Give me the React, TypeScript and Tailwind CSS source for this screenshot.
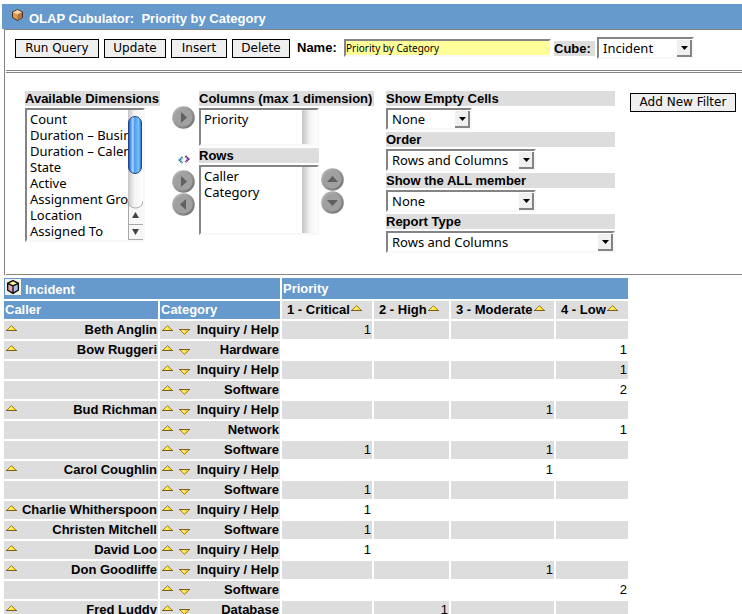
import type { ReactNode } from "react";

const VERDANA = "font-['DejaVu_Sans',sans-serif]";
const inset = "border-2 border-t-[#848484] border-l-[#848484] border-r-[#f8f8f8] border-b-[#f8f8f8] bg-white";

function ToolButton({ children, width }: { children: ReactNode; width: string }) {
  return (
    <button
      type="button"
      className={`${VERDANA} ${width} h-[19px] shrink-0 border border-black bg-[#efefef] text-center text-xs leading-4 whitespace-nowrap`}
    >
      {children}
    </button>
  );
}

function Dropdown({ id, value, width }: { id: string; value: string; width: string }) {
  return (
    <span className={`relative block shrink-0 ${width}`}>
      <select
        id={id}
        defaultValue={value}
        className={`${inset} block h-[22px] w-full appearance-none rounded-none py-0 pr-4 pl-1 font-['Noto_Sans',sans-serif] text-[13px] leading-4 outline-none`}
      >
        <option>{value}</option>
      </select>
      <svg className="pointer-events-none absolute top-[3px] right-0.5" width="15" height="17" viewBox="0 0 15 17" aria-hidden="true">
        <path d="M0 0H15V17H0Z" fill="#848484" />
        <path d="M0 0H13V15H0Z" fill="#f0f0f0" />
        <path d="M4 6H11L7.500 10Z" fill="#000" />
      </svg>
    </span>
  );
}

function Label({ htmlFor, children }: { htmlFor: string; children: ReactNode }) {
  return (
    <label htmlFor={htmlFor} className="block h-[15px] bg-[#ddd] leading-[15px] font-bold whitespace-nowrap">
      {children}
    </label>
  );
}

function ListBox({ id, items, height, scroll }: { id: string; items: string[]; height: string; scroll?: boolean }) {
  return (
    <div className={`${inset} ${height} flex w-[120px]`}>
      <select
        id={id}
        multiple
        className="block h-full min-w-0 flex-1 appearance-none overflow-hidden border-0 bg-white p-0 font-['Noto_Sans',sans-serif] text-[13px] outline-none"
      >
        {items.map((item) => (
          <option key={item} className="h-4 min-h-4 overflow-visible p-0 pl-[3px] leading-4">
            {item}
          </option>
        ))}
      </select>
      {scroll ? (
        <ScrollBar />
      ) : (
        <div className="w-[15px] shrink-0 bg-linear-to-r from-[#c4c4c4] via-[#f2f2f2] to-white" />
      )}
    </div>
  );
}

function ScrollBar() {
  return (
    <svg className="shrink-0" width="15" height="130" viewBox="0 0 15 130" aria-hidden="true">
      <defs>
        <linearGradient id="track">
          <stop offset="0" stopColor="#c4c4c4" />
          <stop offset=".4" stopColor="#f2f2f2" />
          <stop offset="1" stopColor="#fff" />
        </linearGradient>
        <linearGradient id="thumb">
          <stop offset="0" stopColor="#1846b4" />
          <stop offset=".15" stopColor="#4b8fe8" />
          <stop offset=".35" stopColor="#b5dcfb" />
          <stop offset=".45" stopColor="#4c9bf0" />
          <stop offset=".8" stopColor="#7ac2fb" />
          <stop offset="1" stopColor="#2359b8" />
        </linearGradient>
      </defs>
      <path d="M0 0H15V130H0Z" fill="url(#track)" />
      <path d="M0 91Q1 98 7.500 98Q14 98 15 91V130H0Z" fill="#f7f7f7" />
      <path d="M0 91Q1 98 7.500 98Q14 98 15 91M0 114.500H15M0 129.500H15M.5 92V130" fill="none" stroke="#a8a8a8" />
      <rect x=".5" y="6.500" width="13" height="57" rx="6.500" fill="url(#thumb)" stroke="#20458e" />
      <path d="M4 108L7.500 102L11 108ZM4 119L7.500 125L11 119Z" fill="#444" />
    </svg>
  );
}

const turns = { right: 0, down: 90, left: 180, up: 270 };

function RoundButton({ dir, label }: { dir: keyof typeof turns; label: string }) {
  return (
    <button type="button" aria-label={label} className="block size-[23px]">
      <svg width="23" height="23" viewBox="0 0 23 23" aria-hidden="true">
        <defs>
          <linearGradient id={`rim-${dir}`} x1="0" y1="0" x2="1" y2="1">
            <stop offset="0" stopColor="#bcbcbc" />
            <stop offset=".5" stopColor="#979797" />
            <stop offset="1" stopColor="#6c6c6c" />
          </linearGradient>
        </defs>
        <circle cx="11.500" cy="11.500" r="11.300" fill={`url(#rim-${dir})`} />
        <circle cx="11.500" cy="11.500" r="9" fill="#a0a0a0" />
        <path d="M9 6L15 11.500L9 17Z" fill="#606060" transform={`rotate(${turns[dir]} 11.500 11.500)`} />
      </svg>
    </button>
  );
}

function Sort({ down, label }: { down?: boolean; label: string }) {
  return (
    <button type="button" aria-label={label} className="block shrink-0">
      <svg width="11" height="6" viewBox="0 0 11 6" aria-hidden="true">
        {down ? (
          <>
            <path d="M.5 .5H10.500L5.500 5.500Z" fill="#ffd21c" stroke="#a08040" />
            <path d="M0 .5H11" stroke="#7d5c22" />
            <path d="M3 1.500H6L5 4Z" fill="#fff9b0" />
          </>
        ) : (
          <>
            <path d="M.5 5.500L5.500 .5L10.500 5.500Z" fill="#ffde1c" stroke="#a08040" />
            <path d="M0 5.500H11" stroke="#7d5c22" />
            <path d="M3 4.500L5 2L6 4.500Z" fill="#fff9b0" />
          </>
        )}
      </svg>
    </button>
  );
}

const columns = ["1 - Critical", "2 - High", "3 - Moderate", "4 - Low"];

const rows: [string, string, string[]][] = [
  ["Beth Anglin", "Inquiry / Help", ["1", "", "", ""]],
  ["Bow Ruggeri", "Hardware", ["", "", "", "1"]],
  ["", "Inquiry / Help", ["", "", "", "1"]],
  ["", "Software", ["", "", "", "2"]],
  ["Bud Richman", "Inquiry / Help", ["", "", "1", ""]],
  ["", "Network", ["", "", "", "1"]],
  ["", "Software", ["1", "", "1", ""]],
  ["Carol Coughlin", "Inquiry / Help", ["", "", "1", ""]],
  ["", "Software", ["1", "", "", ""]],
  ["Charlie Whitherspoon", "Inquiry / Help", ["1", "", "", ""]],
  ["Christen Mitchell", "Software", ["1", "", "", ""]],
  ["David Loo", "Inquiry / Help", ["1", "", "", ""]],
  ["Don Goodliffe", "Inquiry / Help", ["", "", "1", ""]],
  ["", "Software", ["", "", "", "2"]],
  ["Fred Luddy", "Database", ["", "1", "", ""]],
];

const dimensions = [
  "Count",
  "Duration – Business",
  "Duration – Calendar",
  "State",
  "Active",
  "Assignment Group",
  "Location",
  "Assigned To",
];

export default function App() {
  return (
    <div className="h-screen overflow-hidden bg-white pt-1 pl-0.5 font-['Liberation_Sans',Arial,sans-serif] text-[13px] text-black">
      <header className="flex h-[25px] items-center bg-[#6699cc] pl-2.5 text-white">
        <svg className="mb-1 shrink-0" width="11" height="12" viewBox="0 0 11 12" aria-hidden="true">
          <path d="M5.500 .5L10.500 3V8.500L5.500 11.500L.5 8.500V3Z" fill="#d79a5c" stroke="#4a2e16" />
          <path d="M5.500 1L10 3.200L5.500 5.500L1 3.200Z" fill="#f6d2a6" />
          <path d="M5.500 5.500L10 3.200V8.200L5.500 11Z" fill="#b4753a" />
        </svg>
        <h1 className="ml-1.5 pt-1 font-bold whitespace-pre">OLAP Cubulator:  Priority by Category</h1>
      </header>

      <main className="ml-0.5 border-t border-l border-[#848484]">
        <div className="flex h-10 items-center gap-[5px] pb-1 pl-2.5">
          <ToolButton width="w-[84px]">Run Query</ToolButton>
          <ToolButton width="w-[62px]">Update</ToolButton>
          <ToolButton width="w-14">Insert</ToolButton>
          <ToolButton width="w-[58px]">Delete</ToolButton>
          <label htmlFor="name" className="ml-0.5 w-[42px] shrink-0 font-bold">
            Name:
          </label>
          <input
            id="name"
            defaultValue="Priority by Category"
            className="h-[18px] w-[207px] shrink-0 rounded-none border-2 border-t-[#848484] border-r-[#f8f8f8] border-b-[#f8f8f8] border-l-[#848484] bg-[#ffff99] p-0 font-['Noto_Sans',sans-serif] text-[10px] leading-3 outline-none"
          />
          <div className="-ml-0.5 flex items-center gap-0.5">
            <label htmlFor="cube" className="h-[15px] w-[41px] shrink-0 bg-[#ddd] leading-[15px] font-bold">
              Cube:
            </label>
            <Dropdown id="cube" value="Incident" width="w-[97px]" />
          </div>
        </div>

        <div className="ml-px h-[3px] border-y border-[#848484]" />

        <div className="ml-px flex h-[202px] items-start border-b border-[#848484] pt-[18px] pl-[19px]">
          <div className="flex w-[135px] shrink-0 flex-col gap-0.5">
            <Label htmlFor="available">Available Dimensions</Label>
            <ListBox id="available" items={dimensions} height="h-[134px]" scroll />
          </div>

          <div className="ml-3 flex shrink-0 flex-col items-center pt-[15px]">
            <RoundButton dir="right" label="Add column" />
            <svg className="mt-[26px] mb-[5px]" width="12" height="10" viewBox="0 0 12 10" aria-hidden="true">
              <path d="M4.500 2L1.500 5L4.500 8" fill="none" stroke="#1f78a8" strokeWidth="2" strokeDasharray="1.400 .5" />
              <path d="M6.500 3L4.500 5L6.500 7" fill="none" stroke="#c5c94a" strokeDasharray="1 1" />
              <path d="M7.500 1L10.500 4L7.500 7" fill="none" stroke="#5b1a8c" strokeWidth="2" strokeDasharray="1.400 .5" />
            </svg>
            <RoundButton dir="right" label="Add row" />
            <RoundButton dir="left" label="Remove row" />
          </div>

          <div className="ml-1 flex w-[175px] shrink-0 flex-col gap-0.5">
            <Label htmlFor="columns">Columns (max 1 dimension)</Label>
            <ListBox id="columns" items={["Priority"]} height="h-[38px]" />
            <div className="flex gap-0.5">
              <div className="flex w-[120px] flex-col gap-0.5">
                <Label htmlFor="rows">Rows</Label>
                <ListBox id="rows" items={["Caller", "Category"]} height="h-[70px]" />
              </div>
              <div className="flex flex-col pt-5">
                <RoundButton dir="up" label="Move up" />
                <RoundButton dir="down" label="Move down" />
              </div>
            </div>
          </div>

          <div className="ml-3 flex w-[229px] shrink-0 flex-col gap-0.5">
            <Label htmlFor="empty">Show Empty Cells</Label>
            <Dropdown id="empty" value="None" width="w-[86px]" />
            <Label htmlFor="order">Order</Label>
            <Dropdown id="order" value="Rows and Columns" width="w-[150px]" />
            <Label htmlFor="all">Show the ALL member</Label>
            <Dropdown id="all" value="None" width="w-[150px]" />
            <Label htmlFor="type">Report Type</Label>
            <Dropdown id="type" value="Rows and Columns" width="w-full" />
          </div>

          <div className="ml-[15px] pt-px">
            <ToolButton width="w-[106px]">Add New Filter</ToolButton>
          </div>
        </div>
      </main>

      <table className="mt-px w-[628px] table-fixed border-separate border-spacing-0.5 leading-[18px]">
        <colgroup>
          <col className="w-[154px]" />
          <col className="w-[120px]" />
          <col className="w-[90px]" />
          <col className="w-[75px]" />
          <col className="w-[103px]" />
          <col className="w-[72px]" />
        </colgroup>
        <thead>
          <tr className="h-[21px] bg-[#6699cc] text-left text-white">
            <th colSpan={2} className="p-0 pl-px">
              <div className="flex h-[21px] items-start gap-1">
                <svg className="mt-px" width="16" height="16" viewBox="0 0 15 15" aria-hidden="true">
                  <path d="M0 0H15V15H0Z" fill="#f4f1e4" />
                  <path d="M7.500 1.500L12.500 4V10.500L7.500 13.500L2.500 10.500V4Z" fill="#fff" />
                  <path d="M7.500 1.500L12.500 4L7.500 6.500L2.500 4Z" fill="#fdf5a0" />
                  <path d="M2.500 4L7.500 6.500V13.500L2.500 10.500Z" fill="#e5a5ad" />
                  <path d="M7.500 6.500L12.500 4V10.500L7.500 13.500Z" fill="#a9c5ea" />
                  <path d="M7.500 1.500L12.500 4V10.500L7.500 13.500L2.500 10.500V4ZM2.500 4L7.500 6.500L12.500 4M7.500 6.500V13.500" fill="none" stroke="#111" strokeWidth="1.300" />
                </svg>
                <span className="pt-1 leading-4">Incident</span>
              </div>
            </th>
            <th colSpan={4} className="p-0 pl-px">
              Priority
            </th>
          </tr>
          <tr className="h-[18px] text-left">
            <th className="bg-[#6699cc] p-0 pl-px text-white">Caller</th>
            <th className="bg-[#6699cc] p-0 pl-px text-white">Category</th>
            {columns.map((c) => (
              <th key={c} className="bg-[#ddd] p-0 whitespace-nowrap">
                <div className="flex h-[18px] items-center gap-px pl-[5px]">
                  {c}
                  <span className="pb-1">
                    <Sort label={`Sort by ${c}`} />
                  </span>
                </div>
              </th>
            ))}
          </tr>
        </thead>
        <tbody>
          {rows.map(([caller, category, values], i) => (
            <tr key={i} className="h-[18px]">
              <th className="bg-[#ddd] p-0">
                {caller && (
                  <div className="flex h-[18px] justify-between pr-px pl-0.5">
                    <span className="pt-1">
                      <Sort label={`Sort by ${caller}`} />
                    </span>
                    <span className="whitespace-nowrap">{caller}</span>
                  </div>
                )}
              </th>
              <th className="bg-[#ddd] p-0">
                <div className="flex h-[18px] pr-px pl-0.5">
                  <span className="pt-1">
                    <Sort label="Sort ascending" />
                  </span>
                  <span className="ml-1.5 pt-2">
                    <Sort down label="Sort descending" />
                  </span>
                  <span className="ml-auto whitespace-nowrap">{category}</span>
                </div>
              </th>
              {values.map((v, j) => (
                <td key={j} className={`p-0 pr-px text-right ${i % 2 ? "bg-white" : "bg-[#ddd]"}`}>
                  {v}
                </td>
              ))}
            </tr>
          ))}
        </tbody>
      </table>
    </div>
  );
}
